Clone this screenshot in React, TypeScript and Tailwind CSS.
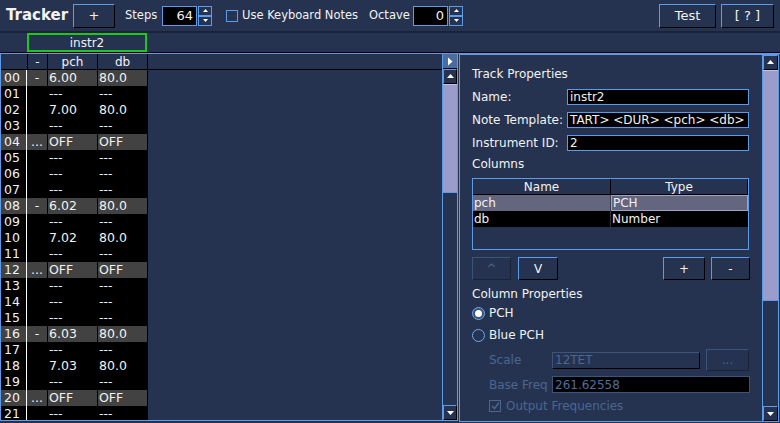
import React from 'react';

const BLUE = 'border-[#5b9cea]';

type Row = { mark: string; pch: string; db: string };

const rows: Row[] = [
  { mark: '-', pch: '6.00', db: '80.0' },
  { mark: '', pch: '---', db: '---' },
  { mark: '', pch: '7.00', db: '80.0' },
  { mark: '', pch: '---', db: '---' },
  { mark: '...', pch: 'OFF', db: 'OFF' },
  { mark: '', pch: '---', db: '---' },
  { mark: '', pch: '---', db: '---' },
  { mark: '', pch: '---', db: '---' },
  { mark: '-', pch: '6.02', db: '80.0' },
  { mark: '', pch: '---', db: '---' },
  { mark: '', pch: '7.02', db: '80.0' },
  { mark: '', pch: '---', db: '---' },
  { mark: '...', pch: 'OFF', db: 'OFF' },
  { mark: '', pch: '---', db: '---' },
  { mark: '', pch: '---', db: '---' },
  { mark: '', pch: '---', db: '---' },
  { mark: '-', pch: '6.03', db: '80.0' },
  { mark: '', pch: '---', db: '---' },
  { mark: '', pch: '7.03', db: '80.0' },
  { mark: '', pch: '---', db: '---' },
  { mark: '...', pch: 'OFF', db: 'OFF' },
  { mark: '', pch: '---', db: '---' },
];

const Btn = ({ label, w, disabled }: { label: string; w: string; disabled?: boolean }) => (
  <div
    className={`${w} h-[23px] flex items-center justify-center border ${
      disabled
        ? 'border-t-[#3d5478] border-l-[#3d5478] border-b-[#1a2236] border-r-[#1a2236] text-[#4a6791]'
        : 'border-t-[#5b9cea] border-l-[#5b9cea] border-b-black border-r-black'
    }`}
  >
    {label}
  </div>
);

const Arrow = ({ dir }: { dir: 'up' | 'down' | 'right' }) => (
  <svg width="9" height="9" viewBox="0 0 9 9">
    {dir === 'up' && <path d="M1 6 L4.5 2 L8 6 Z" fill="#fff" />}
    {dir === 'down' && <path d="M1 3 L4.5 7 L8 3 Z" fill="#fff" />}
    {dir === 'right' && <path d="M2 0.5 L6.5 4.5 L2 8.5 Z" fill="#fff" />}
  </svg>
);

const ScrollBtn = ({ dir }: { dir: 'up' | 'down' }) => (
  <div className="h-[15px] w-full flex items-center justify-center border border-t-[#5b9cea] border-l-[#5b9cea] border-b-black border-r-black bg-[#253350]">
    <Arrow dir={dir} />
  </div>
);

const Spin = ({ value }: { value: string }) => (
  <div className="flex items-center">
    <div className={`w-[35px] h-[20px] bg-black border ${BLUE} flex items-center justify-end pr-[3px] text-[13px]`}>
      {value}
    </div>
    <div className="flex flex-col w-[14px] ml-[1px]">
      <div className={`h-[10px] border ${BLUE} flex items-center justify-center`}>
        <svg width="5" height="3" viewBox="0 0 5 3">
          <path d="M0 3 L2.5 0 L5 3 Z" fill="#fff" />
        </svg>
      </div>
      <div className={`h-[10px] border ${BLUE} flex items-center justify-center`}>
        <svg width="5" height="3" viewBox="0 0 5 3">
          <path d="M0 0 L2.5 3 L5 0 Z" fill="#fff" />
        </svg>
      </div>
    </div>
  </div>
);

const Field = ({ value, w }: { value: string; w: string }) => (
  <div className={`${w} h-[16px] bg-black border ${BLUE} flex items-center pl-[2px] whitespace-nowrap`}>
    {value}
  </div>
);

export default function App() {
  return (
    <div
      className="w-[780px] h-[423px] bg-[#253350] text-[#f2f2f2] text-[12px] flex flex-col overflow-hidden"
      style={{ fontFamily: '"DejaVu Sans", sans-serif' }}
    >
      {/* toolbar */}
      <div className="h-[33px] flex items-center border-b-2 border-[#1a2336] shrink-0 whitespace-nowrap text-[11.5px]">
        <div className="ml-[6px] text-[15px] font-bold w-[67px]">Tracker</div>
        <div className="w-[42px] h-[24px] flex items-center justify-center border border-t-[#5b9cea] border-l-[#5b9cea] border-b-black border-r-black text-[13px]">
          +
        </div>
        <div className="ml-[10px] w-[37px]">Steps</div>
        <Spin value="64" />
        <div className={`ml-[14px] w-[12px] h-[12px] border ${BLUE}`} />
        <div className="ml-[4px] w-[127px]">Use Keyboard Notes</div>
        <div className="w-[44px]">Octave</div>
        <Spin value="0" />
        <div className="ml-auto w-[57px] h-[24px] flex items-center justify-center border border-t-[#5b9cea] border-l-[#5b9cea] border-b-black border-r-black text-[13px]">
          Test
        </div>
        <div className="ml-[5px] mr-[6px] w-[53px] h-[24px] flex items-center justify-center border border-t-[#5b9cea] border-l-[#5b9cea] border-b-black border-r-black text-[13px] whitespace-pre">
          [ ? ]
        </div>
      </div>

      {/* tab row */}
      <div className="h-[20px] flex items-end shrink-0 border-b border-black">
        <div className="ml-[27px] w-[120px] h-[19px] border-2 border-[#1cc81c] flex items-center justify-center">
          instr2
        </div>
      </div>

      {/* main */}
      <div className={`flex-1 flex border-t ${BLUE} min-h-0`}>
        {/* left pane */}
        <div className={`w-[458px] flex border-l border-b border-r ${BLUE} h-[367px]`}>
          <div className="w-[441px] flex flex-col">
            <div className="flex h-[16px] border-b border-black">
              <div className="w-[26px]" />
              <div className="w-[21px] border-l border-r border-black flex items-center justify-center">-</div>
              <div className="w-[50px] border-r border-black flex items-center justify-center">pch</div>
              <div className="w-[50px] border-r border-black flex items-center justify-center">db</div>
            </div>
            <div className="w-[147px] bg-black flex-1 flex flex-col overflow-hidden">
              {rows.map((r, i) => {
                const hl = i % 4 === 0;
                const bg = hl ? 'bg-[#424242]' : '';
                return (
                  <div key={i} className="flex h-[16px] shrink-0 text-[12.5px]">
                    <div className={`w-[25px] pl-[3px] flex items-center ${bg}`}>{String(i).padStart(2, '0')}</div>
                    <div className="w-[1px] bg-white" />
                    <div className={`w-[20px] flex items-center justify-center ${bg}`}>{r.mark}</div>
                    <div className="w-[1px]" />
                    <div className={`w-[49px] pl-[1px] flex items-center ${bg}`}>{r.pch}</div>
                    <div className="w-[1px]" />
                    <div className={`w-[49px] pl-[1px] flex items-center ${bg}`}>{r.db}</div>
                  </div>
                );
              })}
            </div>
          </div>
          {/* left scrollbar */}
          <div className={`w-[15px] flex flex-col border-l ${BLUE}`}>
            <div className="h-[15px] bg-[#4a6c9f] flex items-center justify-center border-b border-black">
              <Arrow dir="right" />
            </div>
            <ScrollBtn dir="up" />
            <div className="h-[108px] bg-[#9c9ccc] border-t border-[#c0c0e8]" />
            <div className={`flex-1 border-t ${BLUE}`} />
            <ScrollBtn dir="down" />
          </div>
        </div>

        {/* right panel */}
        <div className={`ml-[1px] w-[320px] flex border ${BLUE} h-[368px]`}>
          <div className="flex-1 flex flex-col pl-[12px] pr-[12px]">
            <div className="mt-[8px] h-[22px] flex items-center">Track Properties</div>
            <div className="h-[23px] flex items-center">
              <div className="w-[95px]">Name:</div>
              <Field value="instr2" w="w-[182px]" />
            </div>
            <div className="h-[23px] flex items-center">
              <div className="w-[95px]">Note Template:</div>
              <Field value="TART> <DUR> <pch> <db>" w="w-[182px]" />
            </div>
            <div className="h-[23px] flex items-center">
              <div className="w-[95px]">Instrument ID:</div>
              <Field value="2" w="w-[182px]" />
            </div>
            <div className="h-[20px] flex items-center">Columns</div>

            {/* columns table */}
            <div className={`mt-[4px] w-[277px] h-[72px] border ${BLUE} flex flex-col`}>
              <div className="flex h-[16px] border-b border-black">
                <div className="w-[138px] border-r border-black flex items-center justify-center">Name</div>
                <div className="flex-1 border-r border-black flex items-center justify-center">Type</div>
              </div>
              <div className="flex h-[16px] bg-[#64657f]">
                <div className="w-[138px] pl-[1px] flex items-center border-r border-[#3c3d52]">pch</div>
                <div className="flex-1 pl-[1px] flex items-center border border-[#a2a2c8]">PCH</div>
              </div>
              <div className="flex h-[16px] bg-black">
                <div className="w-[138px] pl-[1px] flex items-center border-r border-[#333]">db</div>
                <div className="flex-1 pl-[1px] flex items-center">Number</div>
              </div>
            </div>

            <div className="mt-[7px] flex w-[278px]">
              <Btn label="^" w="w-[39px]" disabled />
              <div className="ml-[7px]">
                <Btn label="V" w="w-[40px]" />
              </div>
              <div className="ml-auto">
                <Btn label="+" w="w-[42px]" />
              </div>
              <div className="ml-[6px]">
                <Btn label="-" w="w-[39px]" />
              </div>
            </div>

            <div className="mt-[4px] h-[20px] flex items-center">Column Properties</div>
            <div className="h-[18px] flex items-center">
              <div className="w-[13px] h-[13px] rounded-full border border-[#6aaaf2] bg-[#3d4f72] flex items-center justify-center">
                <div className="w-[7px] h-[7px] rounded-full bg-white" />
              </div>
              <div className="ml-[4px]">PCH</div>
            </div>
            <div className="h-[26px] flex items-center">
              <div className="w-[13px] h-[13px] rounded-full border border-[#6aaaf2]" />
              <div className="ml-[4px]">Blue PCH</div>
            </div>
            <div className="h-[24px] flex items-center text-[#4a6791]">
              <div className="ml-[17px] w-[63px]">Scale</div>
              <div className="w-[148px] h-[17px] border border-t-[#3d5478] border-l-[#3d5478] border-b-black border-r-black flex items-center pl-[2px]">
                12TET
              </div>
              <div className="ml-[6px] w-[43px] h-[22px] border border-[#3d5478] border-b-[#1a2236] border-r-[#1a2236] flex items-center justify-center">
                ...
              </div>
            </div>
            <div className="h-[25px] flex items-center text-[#4a6791]">
              <div className="ml-[17px] w-[63px]">Base Freq</div>
              <div className="w-[198px] h-[17px] bg-black border border-[#3d5478] flex items-center pl-[2px] text-[#4f6e9e]">
                261.62558
              </div>
            </div>
            <div className="h-[17px] flex items-center text-[#4a6791]">
              <div className="ml-[17px] w-[12px] h-[12px] border border-[#4a6791] flex items-center justify-center">
                <svg width="9" height="9" viewBox="0 0 9 9">
                  <path d="M1 5 L3.5 7.5 L8 1.5" stroke="#4a6791" strokeWidth="1.5" fill="none" />
                </svg>
              </div>
              <div className="ml-[5px]">Output Frequencies</div>
            </div>
          </div>
          {/* right scrollbar */}
          <div className={`w-[16px] flex flex-col border-l ${BLUE}`}>
            <ScrollBtn dir="up" />
            <div className="h-[230px] bg-[#9c9ccc] border-t border-[#c0c0e8]" />
            <div className={`flex-1 border-t ${BLUE}`} />
            <ScrollBtn dir="down" />
          </div>
        </div>
      </div>
    </div>
  );
}
